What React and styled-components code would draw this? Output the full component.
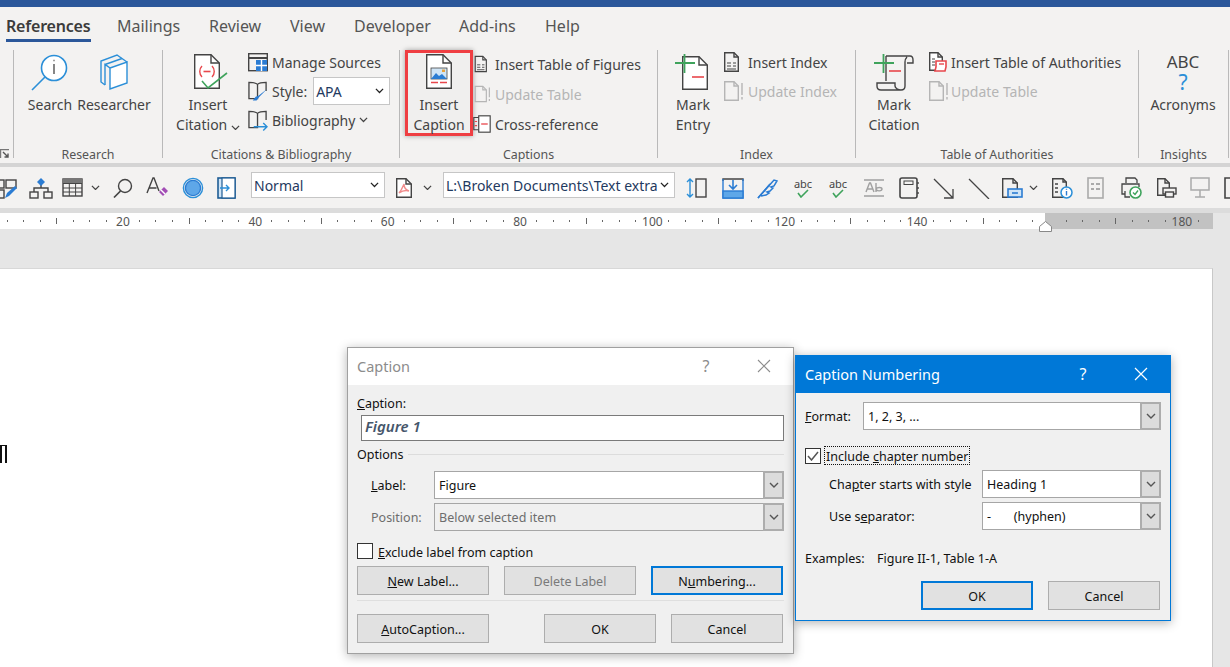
import React from 'react'
import styled, { createGlobalStyle } from 'styled-components'

const INK = '#444'
const BLUE = '#2b8fd8'
const RED = '#e8474c'
const GREEN = '#3fa35c'
const FADED = '#b5b5b5'

const GlobalStyle = createGlobalStyle`
  html, body { margin: 0; padding: 0; }
  body { font-family: "Noto Sans", "Open Sans", sans-serif; background: #e6e6e6; }
`

const Screen = styled.div`
  width: 1230px;
  height: 667px;
  position: relative;
  overflow: hidden;
  display: flex;
  flex-direction: column;
  background: #e6e6e6;
`
const TitleStrip = styled.div`
  height: 7px;
  background: #2b579a;
  flex: none;
`
const TabRow = styled.div`
  height: 38px;
  background: #f3f2f1;
  display: flex;
  padding-left: 6px;
  flex: none;
`
const Tab = styled.div`
  width: ${p => p.$w}px;
  height: 38px;
  line-height: 38px;
  font-size: 16px;
  color: ${p => (p.$active ? '#3b3b3b' : '#555')};
  font-weight: ${p => (p.$active ? 600 : 400)};
  letter-spacing: ${p => (p.$active ? '-0.2px' : '0')};
  position: relative;
  white-space: nowrap;
  &::after {
    content: '';
    display: ${p => (p.$active ? 'block' : 'none')};
    position: absolute;
    left: 0;
    top: 32px;
    width: 85px;
    height: 3px;
    background: #2b579a;
  }
`
const Ribbon = styled.div`
  height: 118px;
  background: #f3f2f1;
  display: flex;
  padding-top: 5px;
  box-sizing: border-box;
  flex: none;
`
const Sep = styled.div`
  width: 1px;
  height: 108px;
  background: #b9b9b9;
  flex: none;
`
const Group = styled.div`
  width: ${p => p.$w}px;
  height: 113px;
  display: flex;
  flex-direction: column;
  flex: none;
`
const GroupBody = styled.div`
  height: 96px;
  display: flex;
  padding-left: ${p => p.$pad || 0}px;
  gap: ${p => p.$gap || 0}px;
`
const GroupLabel = styled.div`
  height: 16px;
  line-height: 18px;
  font-size: 12.4px;
  color: #555;
  text-align: center;
  white-space: nowrap;
`
const Launcher = styled.div`
  height: 16px;
  display: flex;
  align-items: center;
`
const BigButton = styled.div`
  width: ${p => p.$w}px;
  height: ${p => (p.$boxed ? 86 : 96)}px;
  box-sizing: border-box;
  display: flex;
  flex-direction: column;
  align-items: center;
  padding-top: 3px;
  flex: none;
  font-size: 14px;
  line-height: 20px;
  color: #444;
  text-align: center;
  white-space: nowrap;
  ${p => p.$boxed && `
    border: 3px solid #ef3e42;
    padding-top: 0;
    box-shadow: 0 0 5px rgba(0,0,0,.35);
    background: #f0efee;
  `}
`
const BigIcon = styled.div`
  height: 42px;
  display: flex;
  align-items: flex-start;
  justify-content: center;
  flex: none;
  padding-left: ${p => p.$shift || 0}px;
`
const SmallCol = styled.div`
  display: flex;
  flex-direction: column;
  gap: ${p => p.$gap || 0}px;
  margin-left: ${p => p.$left || 0}px;
`
const SmallRow = styled.div`
  height: ${p => p.$h}px;
  box-sizing: border-box;
  padding-bottom: 2px;
  display: flex;
  align-items: center;
  gap: ${p => p.$gap ?? 4}px;
  font-size: 14px;
  color: ${p => (p.$off ? FADED : '#444')};
  white-space: nowrap;
`
const IconSlot = styled.div`
  width: ${p => p.$w || 22}px;
  height: 24px;
  display: flex;
  align-items: center;
  justify-content: center;
  flex: none;
`
const RibbonCombo = styled.div`
  width: ${p => p.$w}px;
  height: ${p => p.$h || 26}px;
  box-sizing: border-box;
  border: 1px solid #c6c6c6;
  background: #fff;
  display: flex;
  align-items: center;
  justify-content: space-between;
  padding: 0 5px 0 2px;
  font-size: 14px;
  color: #1f3a5f;
  white-space: nowrap;
  overflow: hidden;
  flex: none;
  margin-left: ${p => p.$gap || 0}px;
  margin-bottom: ${p => p.$lift || 0}px;
`
const AbcStack = styled.div`
  display: flex;
  flex-direction: column;
  align-items: center;
  height: 42px;
  flex: none;
`
const AbcText = styled.span`
  font-size: 17px;
  line-height: 20px;
  color: #444;
  margin-top: -1px;
`
const QuestionMark = styled.span`
  font-size: 21px;
  line-height: 21px;
  color: ${BLUE};
`
const Band = styled.div`
  height: ${p => p.$h}px;
  background: ${p => p.$c};
  flex: none;
`
const Toolbar = styled.div`
  height: 41px;
  background: #f3f2f1;
  display: flex;
  align-items: center;
  flex: none;
`
const ToolSlot = styled.div`
  width: ${p => p.$w || 24}px;
  height: 24px;
  margin-left: ${p => p.$gap || 0}px;
  display: flex;
  align-items: center;
  justify-content: center;
  flex: none;
`
const RulerRow = styled.div`
  height: 16px;
  position: relative;
  flex: none;
`
const RulerTrack = styled.div`
  width: 1213px;
  height: 16px;
  background: linear-gradient(to right, #fff 0, #fff 1045px, #c2c2c2 1045px, #c2c2c2 100%);
  display: flex;
  overflow: hidden;
`
const RulerCell = styled.div`
  flex: 0 0 16.56px;
  min-width: 0;
  margin-left: ${p => (p.$first ? '-17.78px' : '0')};
  height: 16px;
  display: flex;
  align-items: center;
  justify-content: center;
  font-size: 12px;
  color: #555;
  white-space: nowrap;
`
const RulerDot = styled.i`
  display: block;
  width: 1px;
  height: ${p => (p.$long ? 6 : 2)}px;
  background: #666;
`
const RulerMark = styled.svg`
  position: absolute;
  left: 1039px;
  top: 8px;
`
const Workspace = styled.div`
  flex: 1;
  padding-top: 39px;
  min-height: 0;
`
const DocPage = styled.div`
  width: 1213px;
  height: 100%;
  background: #fff;
  border-right: 1px solid #c8c8c8;
  border-top: 1px solid #d8d8d8;
  box-sizing: border-box;
`
const ParaMark = styled.div`
  position: absolute;
  left: 0;
  top: 445px;
  width: 7px;
  height: 18px;
  box-sizing: border-box;
  border: solid #111;
  border-width: 1px 2px 0 2px;
`

/* dialogs are windows floating over the document */
const Dialog = styled.div`
  position: absolute;
  left: ${p => p.$x}px;
  top: ${p => p.$y}px;
  width: ${p => p.$w}px;
  height: ${p => p.$h}px;
  box-sizing: border-box;
  background: #f0f0f0;
  border: 1px solid ${p => (p.$active ? '#0078d7' : '#a0a0a0')};
  box-shadow: 0 2px 10px rgba(0, 0, 0, 0.3);
  display: flex;
  flex-direction: column;
  font-size: 12.5px;
  color: #111;
`
const DialogTitle = styled.div`
  height: 37px;
  box-sizing: border-box;
  padding-bottom: 2px;
  background: ${p => (p.$active ? '#0078d7' : '#fff')};
  color: ${p => (p.$active ? '#fff' : '#8c8c8c')};
  display: flex;
  align-items: center;
  padding-left: 9px;
  font-size: 14.5px;
  flex: none;
`
const TitleButton = styled.div`
  width: 58px;
  height: 35px;
  display: flex;
  align-items: center;
  justify-content: center;
  font-size: 16px;
  margin-left: ${p => (p.$push ? 'auto' : '0')};
  color: ${p => (p.$active ? '#fff' : '#8c8c8c')};
  flex: none;
`
const DialogBody = styled.div`
  padding: 0 9px;
  display: flex;
  flex-direction: column;
  flex: 1;
`
const TextLine = styled.div`
  height: 18px;
  line-height: 18px;
  margin-top: ${p => p.$top}px;
  white-space: nowrap;
`
const CaptionInput = styled.div`
  height: 26px;
  margin: 2px 0 0 4px;
  box-sizing: border-box;
  border: 1px solid #7a7a7a;
  background: #fff;
  line-height: 20px;
  padding-left: 3px;
  font-size: 15px;
  font-style: italic;
  font-weight: 600;
  color: #46566b;
`
const OptionsHead = styled.div`
  height: 18px;
  margin-top: 4px;
  display: flex;
  align-items: center;
  gap: 5px;
  &::after {
    content: '';
    flex: 1;
    height: 1px;
    background: #dcdcdc;
  }
`
const FieldRow = styled.div`
  height: 28px;
  margin-top: ${p => p.$top}px;
  padding-left: ${p => p.$pad || 0}px;
  display: flex;
  align-items: center;
`
const FieldLabel = styled.div`
  width: ${p => p.$w}px;
  flex: none;
  white-space: nowrap;
  color: ${p => (p.$off ? '#6d6d6d' : '#111')};
`
const Combo = styled.div`
  flex: 1;
  height: 28px;
  box-sizing: border-box;
  border: 1px solid #a6a6a6;
  background: ${p => (p.$off ? '#f0f0f0' : '#fff')};
  color: ${p => (p.$off ? '#6d6d6d' : '#111')};
  display: flex;
  align-items: center;
  padding-left: 4px;
  position: relative;
  white-space: pre;
`
const ComboArrow = styled.div`
  position: absolute;
  right: -1px;
  top: -1px;
  width: 21px;
  height: 28px;
  box-sizing: border-box;
  border: 2px solid #adadad;
  background: #dcdcdc;
  display: flex;
  align-items: center;
  justify-content: center;
`
const CheckRow = styled.div`
  height: ${p => p.$h}px;
  margin-top: ${p => p.$top}px;
  display: flex;
  align-items: center;
  white-space: nowrap;
`
const CheckText = styled.span`
  padding-top: 2px;
`
const CheckBox = styled.div`
  width: 16px;
  height: 16px;
  box-sizing: border-box;
  border: 1px solid #333;
  background: #fff;
  display: flex;
  align-items: center;
  justify-content: center;
  flex: none;
  margin-right: ${p => p.$gap}px;
`
const FocusLabel = styled.div`
  height: 19px;
  line-height: 19px;
  box-sizing: border-box;
  border: 1px dotted #111;
  padding: 0 1px;
`
const ButtonRow = styled.div`
  width: ${p => p.$w}px;
  height: 29px;
  margin-top: ${p => p.$top}px;
  display: flex;
  gap: 15px;
  justify-content: ${p => (p.$end ? 'flex-end' : 'flex-start')};
`
const DlgButton = styled.div`
  width: ${p => p.$w || 132}px;
  height: 29px;
  box-sizing: border-box;
  padding-top: 2px;
  background: #e1e1e1;
  border: ${p => (p.$primary ? '2px solid #0078d7' : '1px solid #adadad')};
  color: ${p => (p.$off ? '#7a7a7a' : '#111')};
  display: flex;
  align-items: center;
  justify-content: center;
  margin-left: ${p => (p.$push ? 'auto' : '0')};
  flex: none;
`
const Divider = styled.div`
  height: 1px;
  margin-top: 5px;
  background: #dfdfdf;
`
const Examples = styled.div`
  height: 18px;
  margin-top: 19px;
  display: flex;
  align-items: center;
`
const AbcTool = styled.div`
  display: flex;
  flex-direction: column;
  align-items: center;
  font-size: 11px;
  line-height: 11px;
  color: #444;
`

const Chev = ({ c = '#444', w = 9 }) => (
  <svg width={w} height={w * 0.6} viewBox="0 0 10 6" fill="none" stroke={c} strokeWidth="1.4"><path d="M1 1l4 4 4-4" /></svg>
)
const Svg = ({ w, h, children }) => (
  <svg width={w} height={h} viewBox={`0 0 ${w} ${h}`} fill="none" strokeWidth="1.4">{children}</svg>
)

const SearchBig = () => (
  <Svg w={40} h={40}>
    <circle cx="24" cy="15" r="12.5" stroke={BLUE} strokeWidth="1.6" fill="#fff" />
    <path d="M24 11v10" stroke={INK} strokeWidth="1.3" />
    <path d="M23.5 7.5h1" stroke={INK} strokeWidth="1.5" />
    <path d="M15 24L2 37" stroke={BLUE} strokeWidth="1.6" />
  </Svg>
)
const ResearcherBig = () => (
  <Svg w={30} h={38}>
    <path d="M11 15L28 9v21l-17 6z" fill="#fff" stroke={BLUE} />
    <path d="M28 9L18 2 2 8v21l4 3" stroke={BLUE} />
    <path d="M11 15L6 11.5V32M11 15L7 12" stroke={BLUE} />
    <path d="M6 11.5L23 5.5" stroke={BLUE} />
  </Svg>
)
const DocOutline = ({ x = 0, y = 0, w = 28, h = 36, c = INK, f = 9, fill = '#fff' }) => (
  <g transform={`translate(${x} ${y})`} stroke={c} strokeWidth="1.4" fill={fill}>
    <path d={`M.7.7H${w - f}L${w - .7} ${f}V${h - .7}H.7z`} />
    <path d={`M${w - f} .7V${f}H${w - .7}`} fill="none" />
  </g>
)
const CitationBig = () => (
  <Svg w={36} h={40}>
    <DocOutline x={1} y={1} w={26} h={35} />
    <path d="M9 13c-3 3-3 8 0 11M19 13c3 3 3 8 0 11" stroke={RED} />
    <path d="M10.5 18.5h7" stroke={RED} strokeWidth="1.6" />
    <path d="M9 28l6 7L34 20" stroke={GREEN} strokeWidth="1.6" fill="none" />
  </Svg>
)
const CaptionBig = () => (
  <Svg w={28} h={38}>
    <DocOutline x={1} y={1} w={26} h={35} />
    <rect x="6" y="15" width="16" height="11" fill="#cfe4f6" stroke="#444" strokeWidth=".8" />
    <path d="M6 26l5-6 3 3 3-2 5 5z" fill="#2b7cd3" />
    <rect x="17" y="16.5" width="3" height="2.5" fill="#e8a33d" />
    <path d="M6 29.5h7M15 29.5h7" stroke={RED} strokeWidth="1.4" />
  </Svg>
)
const MarkEntryBig = () => (
  <Svg w={36} h={40}>
    <DocOutline x={7} y={3} w={26} h={34} />
    <path d="M0 10h20M9.5 1v19" stroke={GREEN} strokeWidth="1.8" />
    <path d="M17 24h12" stroke={RED} strokeWidth="1.6" />
  </Svg>
)
const ScrollBig = () => (
  <Svg w={40} h={40}>
    <path d="M12 3h24c2 0 3 2 3 4v3h-6M33 4c-1 1-2 3-2 5v24c0 3-2 4-4 4H7c-3 0-4-2-4-4v-3h18v3c0 2 3 4 6 4" stroke={INK} />
    <path d="M12 3v25" stroke={INK} />
    <path d="M0 10h20M9.5 1v19" stroke={GREEN} strokeWidth="1.8" />
    <path d="M15 18h12" stroke={RED} strokeWidth="1.6" />
  </Svg>
)
const ManageSources = () => (
  <Svg w={20} h={19}>
    <rect x=".7" y=".7" width="18.6" height="17" stroke={INK} />
    <path d="M1 5h18" stroke={INK} strokeWidth="2" />
    <rect x="8" y="7" width="11" height="11" fill="#2b7cd3" />
    <path d="M13.5 7v11M8 12.5h11" stroke="#fff" />
  </Svg>
)
const OpenBook = ({ brush, arrow }) => (
  <Svg w={21} h={21}>
    <path d="M10 3C8 1 5 1 1 1v17h9V3c2-2 5-2 9-2v9" stroke={INK} />
    {brush && <path d="M20 8l-8 8-3 4-4 0 3-4 3-1z" fill="#2b7cd3" />}
    {arrow && <path d="M6 17h14M16 13l4 4-4 4" stroke={BLUE} strokeWidth="1.5" />}
  </Svg>
)
const SmallDoc = ({ lines, c = INK, bang }) => (
  <Svg w={22} h={22}>
    <DocOutline x={2} y={1} w={15} h={20} f={5} c={c} fill="none" />
    {lines && <path d="M5 12h4M11 12h3M5 15h4M11 15h3M5 18h9" stroke={c} strokeWidth="1.1" />}
    {bang && <path d="M20 3v12M20 17v2.5" stroke={c} strokeWidth="1.4" />}
  </Svg>
)
const CrossRef = () => (
  <Svg w={22} h={24}>
    <path d="M8 4H1v15h7" stroke={INK} />
    <path d="M2 9h3M2 14h3" stroke={RED} strokeWidth="1.3" />
    <rect x="7" y="2" width="14" height="20" fill="#fff" stroke={INK} />
    <path d="M10 12h8" stroke={RED} strokeWidth="1.6" />
  </Svg>
)
const ToaSmall = () => (
  <Svg w={20} h={22}>
    <DocOutline x={1} y={1} w={14} h={19} f={5} />
    <path d="M4 8h3M4 11h3M4 14h3" stroke={INK} strokeWidth="1.1" />
    <path d="M8 10h10v6l-1 4H7l1-4z" fill="#fff" stroke={RED} strokeWidth="1.6" />
    <path d="M11 13h5" stroke={RED} />
  </Svg>
)
const LauncherIcon = () => (
  <Svg w={10} h={10}>
    <path d="M.5 9V.5H9" stroke="#777" />
    <path d="M3 3l5 5M8 4.5V8H4.5" stroke="#555" />
  </Svg>
)
const AbcCheck = () => (
  <AbcTool>abc<svg width="14" height="9" viewBox="0 0 14 9" fill="none" stroke={GREEN} strokeWidth="1.6"><path d="M2 4l3 4 7-7" /></svg></AbcTool>
)

const T = {
  pen: <Svg w={24} h={24}><rect x="1" y="4" width="10" height="8" stroke={INK} /><rect x="13" y="4" width="10" height="8" stroke={INK} /><rect x="1" y="14" width="10" height="8" stroke={INK} /><path d="M12 22l2-5 8-7 2 2-8 8z" fill="#2b7cd3" /></Svg>,
  org: <Svg w={24} h={24}><rect x="1" y="16" width="8" height="6" stroke={INK} /><rect x="15" y="16" width="8" height="6" stroke={INK} /><path d="M5 16v-4h14v4M12 9v3" stroke={INK} /><path d="M12 2l4 4-4 4-4-4z" fill="#2b7cd3" /></Svg>,
  table: <Svg w={22} h={22}><rect x="1" y="2" width="19" height="17" stroke={INK} /><path d="M1 6.5h19M1 11h19M1 15h19M7.3 6.5V19M13.6 6.5V19" stroke={INK} strokeWidth="1" /><rect x="1" y="2" width="19" height="4" fill="#777" /></Svg>,
  zoom: <Svg w={22} h={22}><circle cx="13" cy="9" r="6.5" stroke={INK} /><path d="M8.5 14L2 20.5" stroke={INK} strokeWidth="1.7" /></Svg>,
  clear: <Svg w={24} h={24}><path d="M2 17L8 2h1l5 13M4.5 12h7" stroke={INK} /><path d="M14 16l5-5 4 4-5 5z" fill="#a24db5" /><path d="M16 14l4 4" stroke="#fff" /></Svg>,
  circle: <Svg w={22} h={22}><circle cx="11" cy="11" r="9.6" stroke={BLUE} /><circle cx="11" cy="11" r="7.6" fill="#5ea7e8" stroke="#2b7cd3" /></Svg>,
  frame: <Svg w={20} h={22}><rect x="1" y="1" width="17" height="20" fill="#cfe4f6" stroke="#1e5d94" strokeWidth="1.6" /><rect x="5" y="1" width="13" height="20" fill="#fff" stroke="#1e5d94" strokeWidth="1.2" /><path d="M3 11h9M9 8l3 3-3 3" stroke={BLUE} /></Svg>,
  pdf: <Svg w={20} h={22}><DocOutline x={1} y={1} w={16} h={20} f={6} /><path d="M4 16c3-3 4-7 5-9 0 4 2 6 5 7-3-1-7 0-10 2z" stroke="#f08a8a" /></Svg>,
  height: <Svg w={22} h={22}><path d="M4 2v18M1 5l3-3 3 3M1 17l3 3 3-3" stroke={BLUE} /><rect x="10" y="2" width="10" height="18" stroke={INK} /></Svg>,
  inbox: <Svg w={22} h={22}><path d="M1 4V2h20v2" stroke={INK} /><path d="M1 2v19h20V2" stroke="#2b7cd3" /><rect x="1" y="14" width="20" height="7" fill="#5ea7e8" stroke="#2b7cd3" /><path d="M11 3v8M7 8l4 4 4-4" stroke="#2b7cd3" strokeWidth="1.6" /></Svg>,
  feather: <Svg w={22} h={22}><path d="M2 21L18 3l3 1-3 5-3 1 2 1-3 3-3 1 2 1-3 2-5 1" stroke="#2b7cd3" strokeWidth="1.5" /><path d="M2 21l12-14" stroke="#2b7cd3" /></Svg>,
  ab: <Svg w={22} h={22}><path d="M1 3h20M1 19h20" stroke="#a0a0a0" strokeWidth="1.6" /><path d="M3 15l3.5-9h1L11 15M4.5 12h5M13 6v9M13 12c1-2 6-2 6 0s-5 3-6 0" stroke="#a0a0a0" /></Svg>,
  note: <Svg w={22} h={22}><rect x="2" y="1" width="17" height="20" rx="2" stroke={INK} strokeWidth="1.6" /><rect x="6" y="4" width="9" height="3.5" stroke={INK} strokeWidth="1" /><path d="M20 5v2M20 10v2M20 15v2" stroke={INK} /></Svg>,
  arrow: <Svg w={22} h={22}><path d="M1 2l19 19M20 12v9h-9" stroke={INK} strokeWidth="1.3" /></Svg>,
  line: <Svg w={22} h={22}><path d="M1 2l20 20" stroke={INK} strokeWidth="1.3" /></Svg>,
  docbox: <Svg w={22} h={22}><DocOutline x={1} y={1} w={16} h={20} f={5} fill="none" /><rect x="7" y="12" width="14" height="8" fill="#cfe4f6" stroke="#2b7cd3" strokeWidth="1.6" /><path d="M11 16h6" stroke="#2b7cd3" strokeWidth="1.6" /></Svg>,
  info: <Svg w={22} h={22}><DocOutline x={1} y={1} w={15} h={20} f={4} fill="none" /><path d="M4 7h3M4 11h3M4 15h3" stroke={INK} strokeWidth="1.5" /><circle cx="15.5" cy="15.5" r="5.5" fill="#fff" stroke={BLUE} strokeWidth="1.5" /><path d="M15.5 14v4.5M15.5 11.8v1" stroke="#2b7cd3" /></Svg>,
  grid: <Svg w={22} h={22}><rect x="3" y="1" width="15" height="20" stroke="#aaa" strokeWidth="1.6" /><path d="M6 7h3M11 7h4M6 12h3M11 12h4" stroke="#aaa" strokeWidth="2" /></Svg>,
  printOk: <Svg w={22} h={22}><path d="M6 6V1h9l2 2v3M5 17H2V7h17v3M5 14v6h5" stroke={INK} strokeWidth="1.3" /><circle cx="15.5" cy="15.5" r="5.5" fill="#fff" stroke={GREEN} strokeWidth="1.6" /><path d="M13 15.5l2 2 3-4" stroke={GREEN} /></Svg>,
  print: <Svg w={22} h={22}><DocOutline x={1} y={1} w={13} h={18} f={5} fill="none" /><rect x="7" y="11" width="13" height="6" fill="#f3f2f1" stroke={INK} /><rect x="9.5" y="15" width="8" height="5" fill="#f3f2f1" stroke={INK} /></Svg>,
  screen: <Svg w={22} h={22}><rect x="2" y="1" width="18" height="12" stroke="#aaa" strokeWidth="1.5" /><path d="M11 13v7M6 20h10" stroke="#aaa" strokeWidth="1.5" /></Svg>,
  edge: <Svg w={22} h={22}><path d="M9 1H1v20h8" stroke={INK} strokeWidth="1.6" /></Svg>,
}

const tools = [
  { i: 'pen', g: -7 }, { i: 'org', g: 12 }, { i: 'table', g: 8 }, { c: 1, g: 5 },
  { i: 'zoom', g: 11 }, { i: 'clear', g: 10 }, { i: 'circle', g: 12 }, { i: 'frame', g: 10 },
  { combo: 'Normal', w: 134, g: 12 },
  { i: 'pdf', g: 8 }, { c: 1, g: 5 },
  { combo: 'L:\\Broken Documents\\Text extra', w: 232, g: 11 },
  { i: 'height', g: 10 }, { i: 'inbox', g: 12 }, { i: 'feather', g: 10 }, { a: 1, g: 12 }, { a: 1, g: 11 },
  { i: 'ab', g: 12 }, { i: 'note', g: 11 }, { i: 'arrow', g: 11 }, { i: 'line', g: 11 }, { i: 'docbox', g: 9 },
  { c: 1, g: 4 }, { i: 'info', g: 12 }, { i: 'grid', g: 10 }, { i: 'printOk', g: 11 }, { i: 'print', g: 12 },
  { i: 'screen', g: 9 }, { i: 'edge', g: 11 },
]

const ticks = Array.from({ length: 74 }, (_, n) => n)

// the 160 mark sits under the margin slider, so the ruler leaves it blank
const tickContent = n => {
  if (n === 0 || n === 64) return null
  if (n % 8 === 0) return (n / 8) * 20
  return <RulerDot $long={n % 4 === 0} />
}

const DropCombo = ({ off, children }) => (
  <Combo $off={off}>
    {children}
    <ComboArrow><Chev c="#555" w={10} /></ComboArrow>
  </Combo>
)

const App = () => (
  <Screen>
    <GlobalStyle />
    <TitleStrip />
    <TabRow>
      <Tab $w={111} $active>References</Tab>
      <Tab $w={92}>Mailings</Tab>
      <Tab $w={81}>Review</Tab>
      <Tab $w={64}>View</Tab>
      <Tab $w={105}>Developer</Tab>
      <Tab $w={86}>Add-ins</Tab>
      <Tab $w={50}>Help</Tab>
    </TabRow>

    <Ribbon>
      <Group $w={13}>
        <GroupBody />
        <Launcher><LauncherIcon /></Launcher>
      </Group>
      <Sep />
      <Group $w={148}>
        <GroupBody $pad={14} $gap={6}>
          <BigButton $w={44}><BigIcon><SearchBig /></BigIcon>Search</BigButton>
          <BigButton $w={72}><BigIcon><ResearcherBig /></BigIcon>Researcher</BigButton>
        </GroupBody>
        <GroupLabel>Research</GroupLabel>
      </Group>
      <Sep />
      <Group $w={236}>
        <GroupBody $pad={11}>
          <BigButton $w={68}>
            <BigIcon $shift={6}><CitationBig /></BigIcon>
            Insert
            <span>Citation <Chev /></span>
          </BigButton>
          <SmallCol $gap={3} $left={6}>
            <SmallRow $h={26}><IconSlot $w={20}><ManageSources /></IconSlot>Manage Sources</SmallRow>
            <SmallRow $h={26}>
              <IconSlot $w={20}><OpenBook brush /></IconSlot>Style:
              <RibbonCombo $w={77} $h={28} $gap={2}>APA<Chev c="#222" /></RibbonCombo>
            </SmallRow>
            <SmallRow $h={26}><IconSlot $w={20}><OpenBook arrow /></IconSlot>Bibliography <Chev /></SmallRow>
          </SmallCol>
        </GroupBody>
        <GroupLabel>Citations &amp; Bibliography</GroupLabel>
      </Group>
      <Sep />
      <Group $w={257}>
        <GroupBody $pad={5}>
          <BigButton $w={68} $boxed>
            <BigIcon><CaptionBig /></BigIcon>
            Insert
            <span>Caption</span>
          </BigButton>
          <SmallCol>
            <SmallRow $h={30}><IconSlot $w={18}><SmallDoc lines /></IconSlot>Insert Table of Figures</SmallRow>
            <SmallRow $h={30} $off><IconSlot $w={18}><SmallDoc c={FADED} bang /></IconSlot>Update Table</SmallRow>
            <SmallRow $h={30}><IconSlot $w={18}><CrossRef /></IconSlot>Cross-reference</SmallRow>
          </SmallCol>
        </GroupBody>
        <GroupLabel>Captions</GroupLabel>
      </Group>
      <Sep />
      <Group $w={197}>
        <GroupBody $pad={10}>
          <BigButton $w={50}><BigIcon><MarkEntryBig /></BigIcon>Mark<span>Entry</span></BigButton>
          <SmallCol $gap={3} $left={4}>
            <SmallRow $h={26}><IconSlot><SmallDoc lines /></IconSlot>Insert Index</SmallRow>
            <SmallRow $h={26} $off><IconSlot><SmallDoc c={FADED} bang /></IconSlot>Update Index</SmallRow>
          </SmallCol>
        </GroupBody>
        <GroupLabel>Index</GroupLabel>
      </Group>
      <Sep />
      <Group $w={282}>
        <GroupBody $pad={9}>
          <BigButton $w={58}><BigIcon><ScrollBig /></BigIcon>Mark<span>Citation</span></BigButton>
          <SmallCol $gap={3} $left={4}>
            <SmallRow $h={26} $gap={2}><IconSlot><ToaSmall /></IconSlot>Insert Table of Authorities</SmallRow>
            <SmallRow $h={26} $gap={2} $off><IconSlot><SmallDoc c={FADED} bang /></IconSlot>Update Table</SmallRow>
          </SmallCol>
        </GroupBody>
        <GroupLabel>Table of Authorities</GroupLabel>
      </Group>
      <Sep />
      <Group $w={89}>
        <GroupBody $pad={9}>
          <BigButton $w={70}>
            <AbcStack>
              <AbcText>ABC</AbcText>
              <QuestionMark>?</QuestionMark>
            </AbcStack>
            Acronyms
          </BigButton>
        </GroupBody>
        <GroupLabel>Insights</GroupLabel>
      </Group>
      <Sep />
    </Ribbon>

    <Band $h={4} $c="#d4d4d4" />
    <Toolbar>
      {tools.map((t, n) => {
        if (t.combo) return <RibbonCombo key={n} $w={t.w} $h={26} $gap={t.g} $lift={5}>{t.combo}<Chev c="#222" /></RibbonCombo>
        if (t.c) return <ToolSlot key={n} $w={10} $gap={t.g}><Chev /></ToolSlot>
        if (t.a) return <ToolSlot key={n} $gap={t.g}><AbcCheck /></ToolSlot>
        return <ToolSlot key={n} $gap={t.g}>{T[t.i]}</ToolSlot>
      })}
    </Toolbar>
    <Band $h={5} $c="#dcdcdc" />

    <RulerRow>
      <RulerTrack>
        {ticks.map(n => (
          <RulerCell key={n} $first={n === 0}>{tickContent(n)}</RulerCell>
        ))}
      </RulerTrack>
      <RulerMark width="13" height="11" viewBox="0 0 13 11"><path d="M6.5.5l6 5v5H.5v-5z" fill="#fff" stroke="#888" /></RulerMark>
    </RulerRow>

    <Workspace>
      <DocPage />
    </Workspace>
    <ParaMark />

    <Dialog $x={347} $y={347} $w={447} $h={307}>
      <DialogTitle>
        Caption
        <TitleButton $push>?</TitleButton>
        <TitleButton>
          <svg width="14" height="14" viewBox="0 0 14 14" stroke="#8c8c8c" strokeWidth="1.1"><path d="M1 1l12 12M13 1L1 13" /></svg>
        </TitleButton>
      </DialogTitle>
      <DialogBody>
        <TextLine $top={10}><u>C</u>aption:</TextLine>
        <CaptionInput>Figure 1</CaptionInput>
        <OptionsHead>Options</OptionsHead>
        <FieldRow $top={8} $pad={14}>
          <FieldLabel $w={63}><u>L</u>abel:</FieldLabel>
          <DropCombo>Figure</DropCombo>
        </FieldRow>
        <FieldRow $top={4} $pad={14}>
          <FieldLabel $w={63} $off>Position:</FieldLabel>
          <DropCombo off>Below selected item</DropCombo>
        </FieldRow>
        <CheckRow $top={12} $h={16}>
          <CheckBox $gap={5} />
          <CheckText><u>E</u>xclude label from caption</CheckText>
        </CheckRow>
        <ButtonRow $top={7} $w={426}>
          <DlgButton><span><u>N</u>ew Label...</span></DlgButton>
          <DlgButton $off>Delete Label</DlgButton>
          <DlgButton $primary><span>N<u>u</u>mbering...</span></DlgButton>
        </ButtonRow>
        <Divider />
        <ButtonRow $top={13} $w={426}>
          <DlgButton><span><u>A</u>utoCaption...</span></DlgButton>
          <DlgButton $w={112} $push>OK</DlgButton>
          <DlgButton $w={112}>Cancel</DlgButton>
        </ButtonRow>
      </DialogBody>
    </Dialog>

    <Dialog $x={795} $y={355} $w={376} $h={266} $active>
      <DialogTitle $active>
        Caption Numbering
        <TitleButton $push $active>?</TitleButton>
        <TitleButton $active>
          <svg width="14" height="14" viewBox="0 0 14 14" stroke="#fff" strokeWidth="1.2"><path d="M1 1l12 12M13 1L1 13" /></svg>
        </TitleButton>
      </DialogTitle>
      <DialogBody>
        <FieldRow $top={9}>
          <FieldLabel $w={58}><u>F</u>ormat:</FieldLabel>
          <DropCombo>1, 2, 3, ...</DropCombo>
        </FieldRow>
        <CheckRow $top={16} $h={19}>
          <CheckBox $gap={3}>
            <svg width="12" height="10" viewBox="0 0 12 10" fill="none" stroke="#555" strokeWidth="1.5"><path d="M1 5l3.5 4L11 1" /></svg>
          </CheckBox>
          <FocusLabel>Include <u>c</u>hapter number</FocusLabel>
        </CheckRow>
        <FieldRow $top={5} $pad={24}>
          <FieldLabel $w={153}>Cha<u>p</u>ter starts with style</FieldLabel>
          <DropCombo>Heading 1</DropCombo>
        </FieldRow>
        <FieldRow $top={4} $pad={24}>
          <FieldLabel $w={153}>Use s<u>e</u>parator:</FieldLabel>
          <DropCombo>{'-       (hyphen)'}</DropCombo>
        </FieldRow>
        <Examples>
          <FieldLabel $w={72}>Examples:</FieldLabel>
          Figure II-1, Table 1-A
        </Examples>
        <ButtonRow $top={14} $w={355} $end>
          <DlgButton $w={112} $primary>OK</DlgButton>
          <DlgButton $w={112}>Cancel</DlgButton>
        </ButtonRow>
      </DialogBody>
    </Dialog>
  </Screen>
)

export default App
